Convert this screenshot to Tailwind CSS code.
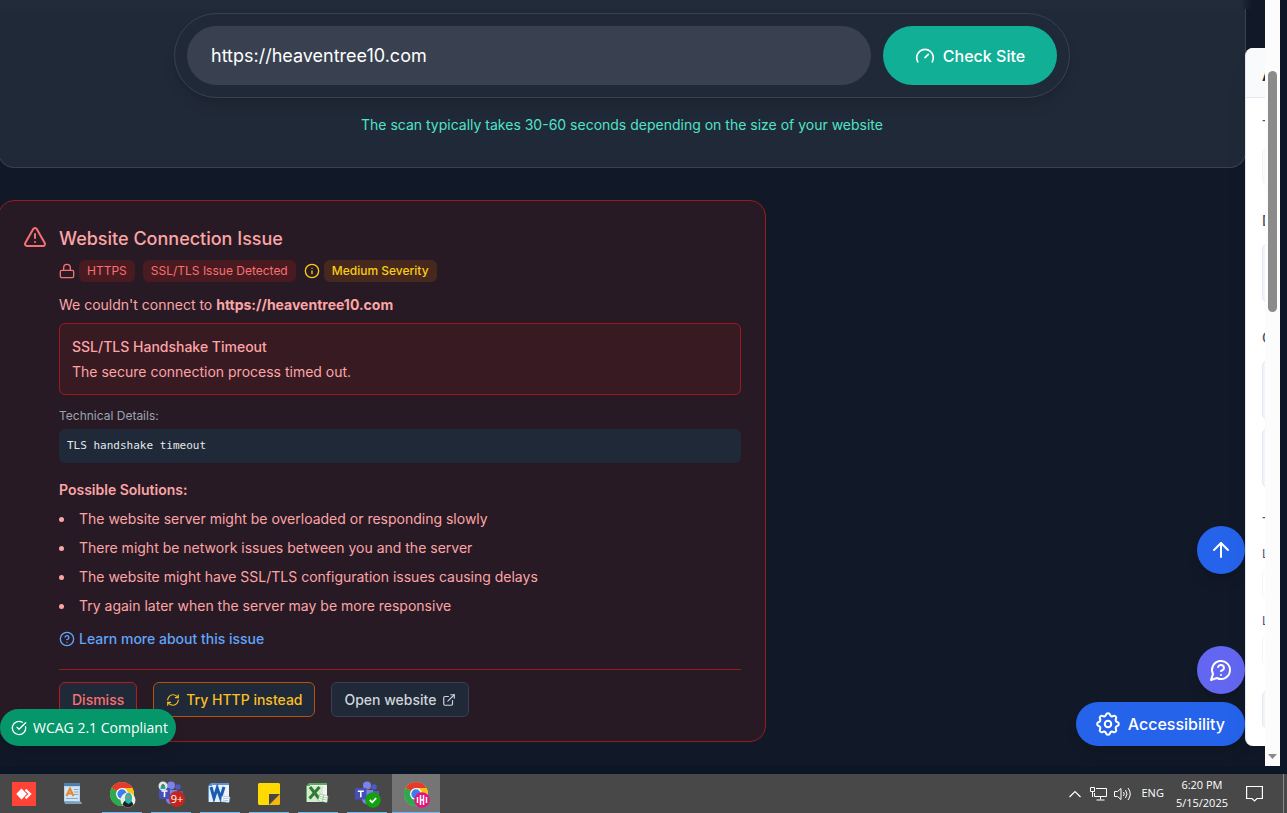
<!DOCTYPE html>
<html lang="en">
<head>
<meta charset="utf-8">
<meta name="viewport" content="width=device-width, initial-scale=1">
<title>Website Scan</title>
<script src="https://cdn.jsdelivr.net/npm/@tailwindcss/browser@4"></script>
</head>
<body class="flex h-screen flex-col overflow-hidden bg-[#0d1626] font-['Inter',sans-serif] text-white">

<div class="flex min-h-0 flex-1 pr-[7px] pb-2">
  <main class="relative min-w-0 flex-1 overflow-hidden bg-[#111827]">
    <div class="absolute inset-x-0 top-0 mr-3 h-[9px] bg-linear-to-r from-[#222b39] from-99% to-[#111827]"></div>

    <section class="mr-[19px] -ml-0.5 rounded-b-2xl border border-t-0 border-[#374151] bg-[#202937] pt-[13px] pb-[30px]">
      <form class="mx-auto flex max-w-4xl gap-3 rounded-full border border-[#374151] p-3 shadow-lg" onsubmit="return false">
        <input type="text" aria-label="Website URL" value="https://heaventree10.com" class="h-[59px] min-w-0 flex-1 rounded-full bg-[#394150] px-6 text-lg text-white outline-none">
        <button class="flex w-[174px] items-center justify-center gap-2 rounded-full bg-[#10af96] text-base font-medium">
          <svg class="size-5" viewBox="0 0 24 24" fill="none" stroke="currentColor" stroke-width="2" stroke-linecap="round" stroke-linejoin="round"><path d="m12 14 4-4"/><path d="M3.34 19a10 10 0 1 1 17.32 0"/></svg>
          Check Site
        </button>
      </form>
      <p class="mt-[15px] text-center text-sm leading-6 text-[#4fe3c8]">The scan typically takes 30-60 seconds depending on the size of your website</p>
    </section>

    <section class="mt-8 -ml-0.5 flex max-w-3xl gap-3 rounded-2xl border border-[#991b1b] bg-[#281a25] p-6 text-sm text-[#fca5a5]">
      <svg class="size-6 shrink-0 text-[#f87171]" viewBox="0 0 24 24" fill="none" stroke="currentColor" stroke-width="2" stroke-linecap="round" stroke-linejoin="round"><path d="m21.73 18-8-14a2 2 0 0 0-3.48 0l-8 14A2 2 0 0 0 4 21h16a2 2 0 0 0 1.73-3"/><path d="M12 9v4"/><path d="M12 17h.01"/></svg>
      <div class="min-w-0 flex-1">
        <h2 class="text-lg leading-7 font-medium">Website Connection Issue</h2>
        <div class="mt-[7px] flex items-center gap-2 text-xs leading-[22px] text-[#f87171]">
          <div class="flex items-center gap-1">
            <svg class="size-4" viewBox="0 0 24 24" fill="none" stroke="currentColor" stroke-width="2" stroke-linecap="round" stroke-linejoin="round"><rect width="20" height="11" x="2" y="11" rx="2"/><path d="M7 11V7a5 5 0 0 1 10 0v4"/></svg>
            <span class="rounded-md bg-[#4a1a21] px-2">HTTPS</span>
          </div>
          <span class="rounded-md bg-[#4a1a21] px-2">SSL/TLS Issue Detected</span>
          <div class="flex items-center gap-1 text-[#facc15]">
            <svg class="size-4" viewBox="0 0 24 24" fill="none" stroke="currentColor" stroke-width="2" stroke-linecap="round" stroke-linejoin="round"><circle cx="12" cy="12" r="10"/><path d="M12 16v-4"/><path d="M12 8h.01"/></svg>
            <span class="rounded-md bg-[#46281e] px-2 font-medium">Medium Severity</span>
          </div>
        </div>
        <p class="mt-3 leading-[22px]">We couldn't connect to <strong class="font-bold">https://heaventree10.com</strong></p>
        <div class="mt-[7px] rounded-md border border-[#991b1b] bg-[#381a23] px-3 py-[10px] leading-[25px]">
          <p class="font-medium">SSL/TLS Handshake Timeout</p>
          <p>The secure connection process timed out.</p>
        </div>
        <p class="mt-3 text-xs leading-[18px] text-[#9ca3af]">Technical Details:</p>
        <pre class="mt-1 rounded-md bg-[#1f2937] p-2 font-['DejaVu_Sans_Mono',monospace] text-[11px] leading-[18px] text-[#e5e7eb]">TLS handshake timeout</pre>
        <h3 class="mt-4 leading-[22px] font-semibold">Possible Solutions:</h3>
        <ul class="mt-[3px] flex list-inside list-disc flex-col leading-[29px]">
          <li>The website server might be overloaded or responding slowly</li>
          <li>There might be network issues between you and the server</li>
          <li>The website might have SSL/TLS configuration issues causing delays</li>
          <li>Try again later when the server may be more responsive</li>
        </ul>
        <a href="#" class="mt-2 flex items-center gap-1 leading-[22px] font-medium text-[#60a5fa]">
          <svg class="size-4" viewBox="0 0 24 24" fill="none" stroke="currentColor" stroke-width="2" stroke-linecap="round" stroke-linejoin="round"><circle cx="12" cy="12" r="10"/><path d="M9.09 9a3 3 0 0 1 5.83 1c0 2-3 3-3 3"/><path d="M12 17h.01"/></svg>
          Learn more about this issue
        </a>
        <div class="mt-[19px] flex gap-4 border-t border-[#991b1b] pt-3 font-medium">
          <button class="h-[35px] rounded-md border border-[#b91c1c] bg-[#1f2937] px-3 text-[#f87171]">Dismiss</button>
          <button class="flex h-[35px] items-center gap-1.5 rounded-md border border-[#b45309] bg-[#1f2937] px-3 text-[#fbbf24]">
            <svg class="size-[14px]" viewBox="0 0 24 24" fill="none" stroke="currentColor" stroke-width="2" stroke-linecap="round" stroke-linejoin="round"><path d="M3 12a9 9 0 0 1 9-9 9.75 9.75 0 0 1 6.74 2.74L21 8"/><path d="M21 3v5h-5"/><path d="M21 12a9 9 0 0 1-9 9 9.75 9.75 0 0 1-6.74-2.74L3 16"/><path d="M8 16H3v5"/></svg>
            Try HTTP instead
          </button>
          <button class="flex h-[35px] items-center gap-1.5 rounded-md border border-[#374151] bg-[#1f2937] px-3 text-[#d1d5db]">
            Open website
            <svg class="size-[14px]" viewBox="0 0 24 24" fill="none" stroke="currentColor" stroke-width="2" stroke-linecap="round" stroke-linejoin="round"><path d="M15 3h6v6"/><path d="M10 14 21 3"/><path d="M18 13v6a2 2 0 0 1-2 2H5a2 2 0 0 1-2-2V8a2 2 0 0 1 2-2h6"/></svg>
          </button>
        </div>
      </div>
    </section>

    <!-- Compliance badge -->
    <button class="absolute bottom-5 left-0 flex h-[37px] items-center gap-1.5 rounded-full bg-[#059669] pr-2 pl-[11px] font-['Open_Sans',sans-serif] text-sm font-medium shadow-lg">
      <svg class="size-4" viewBox="0 0 24 24" fill="none" stroke="currentColor" stroke-width="2" stroke-linecap="round" stroke-linejoin="round"><path d="M21.8 10A10 10 0 1 1 17 3.34"/><path d="m9 11 3 3L22 4"/></svg>
      WCAG 2.1 Compliant
    </button>

    <!-- Floating actions -->
    <div class="absolute right-5 bottom-5 flex flex-col items-end">
      <button aria-label="Back to top" class="mb-[72px] flex size-12 items-center justify-center rounded-full bg-[#2563eb] shadow-lg">
        <svg class="size-6" viewBox="0 0 24 24" fill="none" stroke="currentColor" stroke-width="2" stroke-linecap="round" stroke-linejoin="round"><path d="m5 12 7-7 7 7"/><path d="M12 19V5"/></svg>
      </button>
      <button aria-label="Help" class="mb-2 flex size-12 items-center justify-center rounded-full bg-[#6366f1] shadow-lg">
        <svg class="size-6" viewBox="0 0 24 24" fill="none" stroke="currentColor" stroke-width="2" stroke-linecap="round" stroke-linejoin="round"><path d="M7.9 20A9 9 0 1 0 4 16.1L2 22Z"/><path d="M9.09 9a3 3 0 0 1 5.83 1c0 2-3 3-3 3"/><path d="M12 17h.01"/></svg>
      </button>
      <button class="flex h-11 items-center gap-2 rounded-full bg-[#2563eb] px-5 text-base font-medium shadow-lg">
        <svg class="size-6" viewBox="2 1.200 20 20" fill="none" stroke="currentColor" stroke-width="1.700" stroke-linecap="round" stroke-linejoin="round"><path d="M10.330 3.500c.430-1.760 2.910-1.760 3.340 0a1.720 1.720 0 0 0 2.570 1.070c1.540-.94 3.310.83 2.370 2.370a1.720 1.720 0 0 0 1.070 2.570c1.760.43 1.760 2.920 0 3.350a1.720 1.720 0 0 0-1.070 2.570c.94 1.540-.83 3.310-2.370 2.370a1.720 1.720 0 0 0-2.570 1.070c-.43 1.760-2.920 1.760-3.350 0a1.720 1.720 0 0 0-2.570-1.070c-1.540.94-3.310-.83-2.370-2.370a1.720 1.720 0 0 0-1.070-2.570c-1.760-.43-1.760-2.920 0-3.350a1.720 1.720 0 0 0 1.070-2.570c-.94-1.540.83-3.310 2.370-2.370 1 .61 2.300.07 2.580-1.070z"/><circle cx="12" cy="11.200" r="2.700"/></svg>
        Accessibility
      </button>
    </div>

    <!-- Settings drawer, mostly behind the scrollbar -->
    <aside class="absolute top-12 right-0 bottom-5 flex w-5 flex-col overflow-hidden rounded-l-lg border-l border-[#e2e8f0] bg-white text-sm leading-5 font-medium text-[#475569] shadow-xl">
      <div class="h-[50px] shrink-0 border-b border-[#e2e8f0] bg-[#f8fafc] py-[15px] pl-4 text-base font-semibold text-[#1e293b]">A</div>
      <div class="flex flex-col pl-4">
        <span class="mt-[18px]">T</span>
        <div class="mt-[11px] h-[39px] w-10 rounded-md border border-[#f1f5f9] bg-[#f8fafc]"></div>
        <span class="mt-[25px]">D</span>
        <div class="mt-3 h-[60px] w-10 rounded-md border border-[#e2e8f0] bg-[#eff4ff]"></div>
        <span class="mt-[25px]">C</span>
        <div class="mt-3 h-[60px] w-10 rounded-md border border-[#e2e8f0] bg-[#eff4ff]"></div>
        <div class="mt-2 h-[60px] w-10 rounded-md border border-[#e2e8f0] bg-[#eff4ff]"></div>
        <span class="mt-[25px]">T</span>
        <span class="mt-[11px] text-xs leading-5 font-normal">L</span>
        <div class="mt-1 h-[31px] w-10 rounded-md border border-[#f1f5f9] bg-white"></div>
        <span class="mt-3 text-xs leading-5 font-normal">L</span>
        <div class="mt-1 h-[31px] w-10 rounded-md border border-[#f1f5f9] bg-white"></div>
        <div class="mt-6 h-[39px] w-10 rounded-md border border-[#e2e8f0] bg-[#f1f5f9]"></div>
      </div>
    </aside>
  </main>

  <!-- Scrollbar -->
  <div class="flex w-[15px] shrink-0 flex-col items-center justify-between bg-[#fcfcfc] pt-[71px] pb-[7px]">
    <div class="h-[241px] w-[9px] rounded-full bg-[#8b8b8b]"></div>
    <svg class="h-[5px] w-[9px]" viewBox="0 0 9 5"><path d="M0 0h9L4.500 5z" fill="#8b8b8b"/></svg>
  </div>
</div>

<!-- Taskbar -->
<footer class="flex h-[39px] shrink-0 items-stretch justify-between bg-[#484848] font-['Open_Sans',sans-serif] text-[11px]">
  <nav class="flex gap-px">
    <button aria-label="AnyDesk" class="flex w-12 items-center justify-center">
      <svg class="size-6" viewBox="0 0 24 24"><path fill="#ff4337" d="M0 0h24v24H0z"/><path fill="#fff" d="m9.500 6.500 5.300 5.500-5.300 5.500L4.200 12z"/><path d="m13.500 7.600 4.600 4.400-4.600 4.400" fill="none" stroke="#fff" stroke-width="2.200"/></svg>
    </button>
    <button aria-label="WordPad" class="flex w-12 items-center justify-center">
      <svg class="size-6" viewBox="0 0 24 24"><path fill="#b9d3e8" d="M3 2h16v18H3z"/><path fill="#4f80ab" d="M3 1h16v3H3z"/><path fill="#d3e6f6" d="M4 5h14v14H4z"/><path d="M5.500 14 9 6.500l3.500 7.500M6.800 11.500h4.500" fill="none" stroke="#e8862b" stroke-width="2"/><path d="M13 7.500h4.500M13 10h4.500M13 12.500h4.500M5 16.500h12" stroke="#88aac8"/><path fill="#7ca0c0" d="m3 19 17 .5 1 2.500H4z"/></svg>
    </button>
    <button aria-label="Chrome" class="relative flex w-12 items-center justify-center">
      <svg class="size-7" viewBox="0 0 28 28"><g transform="translate(2 2)"><circle cx="12" cy="12" r="12" fill="#fbc116"/><path fill="#e33b2e" d="M12 12 1.600 6A12 12 0 0 1 22.400 6z"/><path fill="#2da94f" d="M12 12 1.600 6A12 12 0 0 0 12 24l5.200-9z"/><path fill="#fbc116" d="M12 24a12 12 0 0 0 10.400-18H12l5.200 9z"/><circle cx="12" cy="12" r="6" fill="#fff"/><circle cx="12" cy="12" r="4.700" fill="#3b7ded"/></g><circle cx="20" cy="20" r="7.500" fill="#e8ebea"/><path fill="#222" d="M14.500 25c1-4 3-5 5.500-5s4.500 1.500 5.500 5a7.500 7.500 0 0 1-11 0z"/><path fill="#22b8ac" d="M17 18c0-7 7-7 7 0l-.5 4-3 2-3-2z"/><circle cx="20.300" cy="17" r="1.800" fill="#b48668"/></svg>
      <span class="absolute inset-x-1 bottom-0 h-px bg-[#76b9ed]"></span>
    </button>
    <button aria-label="Teams" class="relative flex w-12 items-center justify-center">
      <svg class="size-7" viewBox="0 0 28 28"><circle cx="21" cy="7" r="2.700" fill="#5059c9"/><circle cx="14" cy="5.500" r="4" fill="#7b83eb"/><path fill="#5059c9" d="M17 11h9v6c0 6-9 6-9 0z"/><path fill="#7b83eb" d="M9 10h11v9c0 7-11 7-11 0z"/><path fill="#464eb8" d="M2 8h11v11H2z"/><path d="M4.500 11h6M7.500 11v6" stroke="#fff" stroke-width="1.600"/><circle cx="6" cy="6" r="4.500" fill="#e3e8e6"/><path fill="#19a99d" d="M3.500 9c0-6 5-7 5 0z"/><circle cx="6" cy="5.500" r="1.200" fill="#8b6650"/></svg>
      <span class="absolute top-[17px] left-[22px] flex size-4 items-center justify-center rounded-full bg-[#c4261d] text-[11px]">9+</span>
      <span class="absolute inset-x-1 bottom-0 h-px bg-[#76b9ed]"></span>
    </button>
    <button aria-label="Word" class="relative flex w-12 items-center justify-center">
      <svg class="size-6" viewBox="0 0 24 24"><path fill="#eef3f9" d="M3 1h18v19H3z"/><path fill="#5c94d4" d="M0 4 3 1h18v2H4v17H0z"/><path fill="#e4eefa" d="M1 4h16v16H1z"/><path d="m3 5 3 11L9.200 6l3.300 10L16 5" fill="none" stroke="#1c5cb0" stroke-width="3"/><path fill="#fff" stroke="#8aa9d0" stroke-width=".6" d="m14 14 8 1-1 5.500-8-1z"/><path d="m15 16 5.500.7M14.700 18l5.500.7" stroke="#8fb0da" stroke-width=".8"/></svg>
      <span class="absolute inset-x-1 bottom-0 h-px bg-[#76b9ed]"></span>
    </button>
    <button aria-label="Sticky Notes" class="relative flex w-12 items-center justify-center">
      <svg class="size-[22px]" viewBox="0 0 22 22"><path fill="#ffd900" d="M1 0h20l1 1v10H11v11H1l-1-1V1z"/><path fill="#f5b80b" d="M11 11h11v10l-1 1H11z"/><path fill="#474747" d="M11 11h11L11 22z"/></svg>
      <span class="absolute inset-x-1 bottom-0 h-px bg-[#76b9ed]"></span>
    </button>
    <button aria-label="Excel" class="relative flex w-12 items-center justify-center">
      <svg class="size-6" viewBox="0 0 24 24"><path fill="#edf5ec" d="M3 1h18v19H3z"/><path fill="#5fa95f" d="M0 4 3 1h18v2H4v17H0z"/><path fill="#d5ead2" d="M1 4h16v16H1z"/><path d="m4 5 9 11.500M13.500 5 3.500 16.500" fill="none" stroke="#2f7d33" stroke-width="3"/><path fill="#fff" stroke="#7fb27f" stroke-width=".6" d="m14 12 8 2-1 6.500-9-2z"/><path d="m14 14.500 7 1.500M13.500 16.500l7 1.500M17.500 13l-1 6.500" stroke="#8fc090" stroke-width=".8"/></svg>
      <span class="absolute inset-x-1 bottom-0 h-px bg-[#76b9ed]"></span>
    </button>
    <button aria-label="Teams" class="relative flex w-12 items-center justify-center">
      <svg class="size-7" viewBox="0 0 28 28"><circle cx="21" cy="7" r="2.700" fill="#5059c9"/><circle cx="14" cy="5.500" r="4" fill="#7b83eb"/><path fill="#5059c9" d="M17 11h9v6c0 6-9 6-9 0z"/><path fill="#7b83eb" d="M9 10h11v9c0 7-11 7-11 0z"/><path fill="#464eb8" d="M2 8h11.500v11.500H2z"/><path d="M4.800 11.300h6M7.800 11.300v6" stroke="#fff" stroke-width="1.600"/><circle cx="20" cy="20" r="7.800" fill="#13a10e"/><path d="m16.800 20 2.400 2.300 4-4.200" fill="none" stroke="#fff" stroke-width="1.800"/></svg>
      <span class="absolute inset-x-1 bottom-0 h-px bg-[#76b9ed]"></span>
    </button>
    <button aria-label="Chrome, active" class="relative flex w-12 items-center justify-center bg-[#757575]">
      <svg class="size-7" viewBox="0 0 28 28"><g transform="translate(2 2)"><circle cx="12" cy="12" r="12" fill="#fbc116"/><path fill="#e33b2e" d="M12 12 1.600 6A12 12 0 0 1 22.400 6z"/><path fill="#2da94f" d="M12 12 1.600 6A12 12 0 0 0 12 24l5.200-9z"/><path fill="#fbc116" d="M12 24a12 12 0 0 0 10.400-18H12l5.200 9z"/><circle cx="12" cy="12" r="6" fill="#fff"/><circle cx="12" cy="12" r="4.700" fill="#3b7ded"/></g><circle cx="20" cy="20" r="7.800" fill="#e0157f"/><path d="M15.500 17v6M18.500 15v10M21.500 15v10M24.500 17v6M18.500 20h3" stroke="#fff" stroke-width="1.500"/></svg>
      <span class="absolute inset-x-0 bottom-0 h-px bg-[#76b9ed]"></span>
    </button>
  </nav>
  <div class="flex items-center">
    <button aria-label="Show hidden icons" class="mr-[9px]"><svg class="h-2 w-3" viewBox="0 0 12 8" fill="none" stroke="#fff" stroke-width="1.200"><path d="m.5 7 5.500-5.500L11.500 7"/></svg></button>
    <button aria-label="Network" class="mr-[7px]"><svg class="h-[14px] w-[17px]" viewBox="0 0 17 14" fill="none" stroke="#fff"><path d="M6 1.500h10.500v8H4.500V6M10.500 9.500v3M6.500 13h8M.5.500h4v4h-4zM2.500 4.500V10"/></svg></button>
    <button aria-label="Volume" class="mr-[9px]"><svg class="h-[14px] w-[18px]" viewBox="0 0 18 14" fill="none" stroke="#fff"><path d="M.5 4.500h3l3.500-3v11l-3.500-3h-3zM9.500 5q1.500 2 0 4M11.500 3q3 4 0 8M14 1q4.500 6 0 12"/></svg></button>
    <span class="mr-3">ENG</span>
    <div class="mr-[18px] text-center leading-[18px]"><p>6:20 PM</p><p>5/15/2025</p></div>
    <button aria-label="Notifications" class="mr-5"><svg class="h-[17px] w-[17px]" viewBox="0 0 17 17" fill="none" stroke="#fff" stroke-width="1.200"><path d="M.6 1.500h15.800v12H11L8.500 16 6 13.500H.6z"/></svg></button>
    <div class="mr-[3px] h-full w-px bg-[#8a8a8a]"></div>
  </div>
</footer>
</body>
</html>
